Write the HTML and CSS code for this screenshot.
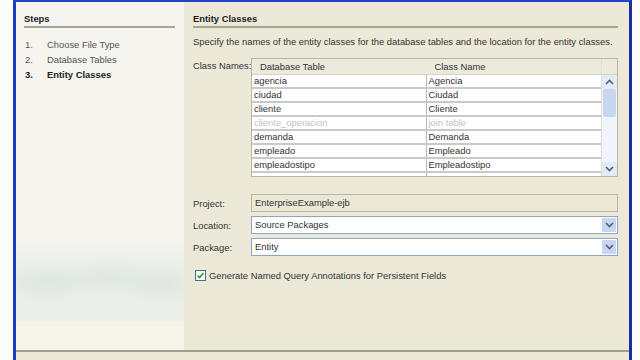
FILE: index.html
```html
<!DOCTYPE html>
<html lang="en">
<head>
    <meta charset="UTF-8">
    <title>New Entity Classes from Database</title>
    <link rel="stylesheet" href="styles.css">
</head>
<body>
    <div class="screen">
        <div class="window">
            <div class="main">
                <!-- Steps panel -->
                <div class="steps">
                    <div class="section-title">Steps</div>
                    <ol class="step-list">
                        <li><span class="num">1.</span>Choose File Type</li>
                        <li><span class="num">2.</span>Database Tables</li>
                        <li class="current"><span class="num">3.</span>Entity Classes</li>
                    </ol>
                    <div class="clouds"></div>
                </div>

                <!-- Wizard content -->
                <div class="content">
                    <div class="section-title">Entity Classes</div>
                    <p class="desc">Specify the names of the entity classes for the database tables and the location for the entity classes.</p>

                    <div class="row table-row">
                        <label class="label">Class Names:</label>
                        <div class="table">
                            <div class="table-main">
                                <div class="thead">
                                    <div class="cell">Database Table</div>
                                    <div class="cell">Class Name</div>
                                </div>
                                <div class="tbody">
                                    <div class="tr"><div class="cell">agencia</div><div class="cell">Agencia</div></div>
                                    <div class="tr"><div class="cell">ciudad</div><div class="cell">Ciudad</div></div>
                                    <div class="tr"><div class="cell">cliente</div><div class="cell">Cliente</div></div>
                                    <div class="tr disabled"><div class="cell">cliente_operacion</div><div class="cell">join table</div></div>
                                    <div class="tr"><div class="cell">demanda</div><div class="cell">Demanda</div></div>
                                    <div class="tr"><div class="cell">empleado</div><div class="cell">Empleado</div></div>
                                    <div class="tr"><div class="cell">empleadostipo</div><div class="cell">Empleadostipo</div></div>
                                    <div class="tr partial"><div class="cell"></div><div class="cell"></div></div>
                                </div>
                            </div>
                            <div class="scrollbar">
                                <div class="sb-head"></div>
                                <div class="sb-track">
                                    <div class="sb-btn"><svg width="9" height="6" viewBox="0 0 9 6"><path d="M1 5 L4.5 1.5 L8 5" fill="none" stroke="#4d6185" stroke-width="1.6"/></svg></div>
                                    <div class="sb-thumb"></div>
                                    <div class="sb-space"></div>
                                    <div class="sb-btn"><svg width="9" height="6" viewBox="0 0 9 6"><path d="M1 1 L4.5 4.5 L8 1" fill="none" stroke="#4d6185" stroke-width="1.6"/></svg></div>
                                </div>
                            </div>
                        </div>
                    </div>

                    <div class="fields">
                        <div class="row">
                            <label class="label">Project:</label>
                            <div class="field readonly">EnterpriseExample-ejb</div>
                        </div>
                        <div class="row">
                            <label class="label">Location:</label>
                            <div class="field combo">
                                <span class="value">Source Packages</span>
                                <span class="drop"><svg width="9" height="6" viewBox="0 0 9 6"><path d="M1 1 L4.5 4.5 L8 1" fill="none" stroke="#4d6185" stroke-width="1.6"/></svg></span>
                            </div>
                        </div>
                        <div class="row">
                            <label class="label">Package:</label>
                            <div class="field combo">
                                <span class="value">Entity</span>
                                <span class="drop"><svg width="9" height="6" viewBox="0 0 9 6"><path d="M1 1 L4.5 4.5 L8 1" fill="none" stroke="#4d6185" stroke-width="1.6"/></svg></span>
                            </div>
                        </div>
                    </div>

                    <div class="check">
                        <span class="box"><svg width="9" height="9" viewBox="0 0 9 9"><path d="M1.5 4.5 L3.5 6.5 L7.5 2" fill="none" stroke="#21a121" stroke-width="1.6"/></svg></span>
                        Generate Named Query Annotations for Persistent Fields
                    </div>
                </div>
            </div>
            <div class="footer"></div>
        </div>
    </div>
</body>
</html>
```

FILE: styles.css
```css
body {
    margin: 0;
    background: #fbfbfb;
    font-family: "Liberation Sans", Arial, sans-serif;
    font-size: 9.4px;
    color: #333;
}

.screen {
    display: flex;
    height: 360px;
    padding: 0 8px 0 13px;
    box-sizing: border-box;
}

.window {
    flex: 1;
    display: flex;
    flex-direction: column;
    border-top: 2px solid #1f45c4;
    border-left: 3px solid #1a3db8;
    border-right: 3px solid #1a2e9e;
    background: #ece9d8;
}

.main {
    flex: 1;
    display: flex;
}

/* Steps panel */
.steps {
    width: 168px;
    background: #f5f4ef;
    padding: 11px 9px 0 8px;
    box-sizing: border-box;
    display: flex;
    flex-direction: column;
}

.section-title {
    font-weight: bold;
    line-height: 11px;
    color: #222;
    padding-bottom: 2px;
    border-bottom: 2px solid #a8a697;
}

.step-list {
    list-style: none;
    margin: 9px 0 0;
    padding: 0;
    color: #555;
}

.step-list li {
    line-height: 15px;
    height: 15px;
    padding-left: 1px;
}

.step-list .num {
    display: inline-block;
    width: 22px;
}

.step-list .current {
    font-weight: bold;
    color: #222;
}

.clouds {
    flex: 1;
    margin: 0 -9px 0 -8px;
    background:
        radial-gradient(ellipse 50px 20px at 30px 200px, rgba(205, 222, 214, 0.45), transparent),
        radial-gradient(ellipse 60px 22px at 95px 196px, rgba(208, 222, 214, 0.4), transparent),
        radial-gradient(ellipse 45px 20px at 150px 202px, rgba(210, 222, 214, 0.4), transparent),
        linear-gradient(to bottom, transparent 0, transparent 160px, rgba(230, 236, 230, 0.7) 185px, rgba(230, 235, 228, 0.7) 238px, #f7f5ea 240px, #f7f5ea 100%);
}

/* Wizard content */
.content {
    flex: 1;
    padding: 11px 11px 0 9px;
    display: flex;
    flex-direction: column;
}

.desc {
    margin: 8px 0 0;
    line-height: 12px;
    white-space: nowrap;
}

.row {
    display: flex;
    align-items: center;
}

.label {
    width: 58px;
    flex-shrink: 0;
    white-space: nowrap;
}

.table-row {
    align-items: flex-start;
    margin-top: 10px;
}

.table-row .label {
    padding-top: 2px;
}

.table {
    flex: 1;
    display: flex;
    height: 117px;
    border: 1px solid #b8b6a8;
    background: #fff;
    overflow: hidden;
}

.table-main {
    flex: 1;
    display: flex;
    flex-direction: column;
}

.thead {
    display: flex;
    height: 15px;
    line-height: 15px;
    background: #ebeadb;
    border-bottom: 1px solid #d4d2c2;
}

.thead .cell {
    padding-left: 8px;
}

.cell {
    width: 50%;
    box-sizing: border-box;
    padding-left: 2px;
    white-space: nowrap;
}

.tr {
    display: flex;
    height: 14px;
    line-height: 12px;
    box-sizing: border-box;
    border-bottom: 2px solid #c9c9c9;
}

.tr .cell:first-child {
    border-right: 1px solid #b8b8b8;
}

.tr.disabled {
    color: #c2c2c2;
}

.scrollbar {
    width: 15px;
    display: flex;
    flex-direction: column;
    background: #f3f2ea;
    border-left: 1px solid #e0ded2;
}

.sb-head {
    height: 15px;
    background: #ebeadb;
    border-bottom: 1px solid #d4d2c2;
}

.sb-track {
    flex: 1;
    display: flex;
    flex-direction: column;
    background: #f1f4fa;
}

.sb-btn {
    height: 14px;
    display: flex;
    align-items: center;
    justify-content: center;
    background: #e4ebf7;
}

.sb-thumb {
    height: 28px;
    background: #c8d6f2;
    border-radius: 2px;
    margin: 0 1px;
}

.sb-space {
    flex: 1;
}

.fields {
    display: flex;
    flex-direction: column;
    gap: 4px;
    margin-top: 17px;
}

.field {
    flex: 1;
    height: 18px;
    box-sizing: border-box;
    border: 1px solid #a5a597;
    line-height: 16px;
    padding-left: 3px;
    background: #fff;
}

.field.readonly {
    background: #ebe8d7;
    border-color: #b8b6a5;
}

.field.combo {
    display: flex;
    border-color: #8ea4c6;
    padding-right: 1px;
}

.value {
    flex: 1;
}

.drop {
    width: 14px;
    margin: 1px 0;
    display: flex;
    align-items: center;
    justify-content: center;
    background: #c9d6f0;
    border-radius: 1px;
}

.check {
    display: flex;
    align-items: center;
    gap: 3px;
    margin-top: 14px;
    padding-left: 2px;
}

.box {
    width: 11px;
    height: 11px;
    box-sizing: border-box;
    border: 1px solid #4a6e8c;
    background: #fff;
    display: flex;
    align-items: center;
    justify-content: center;
}

.footer {
    height: 8px;
    border-top: 2px solid #a09e90;
    background: #ece9d8;
}
```
